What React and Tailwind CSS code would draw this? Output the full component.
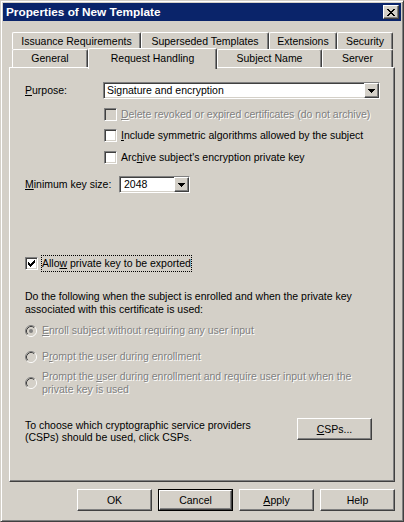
import React from "react";

const raised =
  "border border-t-white border-l-white border-r-[#404040] border-b-[#404040] shadow-[inset_-1px_-1px_0_#808080] bg-[#d4d0c8]";
const sunken =
  "border border-t-[#808080] border-l-[#808080] border-r-white border-b-white shadow-[inset_1px_1px_0_#404040,inset_-1px_-1px_0_#d4d0c8]";
const disabledText = "text-[#808080] [text-shadow:1px_1px_0_#ffffff]";

const U = ({ children }) => <span className="underline underline-offset-[1px]">{children}</span>;

const DropArrow = () => (
  <svg width="7" height="4" viewBox="0 0 7 4" shapeRendering="crispEdges">
    <path d="M0 0h7v1H0z M1 1h5v1H1z M2 2h3v1H2z M3 3h1v1H3z" fill="#000" />
  </svg>
);

const Combo = ({ value, className, textPad }) => (
  <div className={`flex h-[17px] bg-white ${sunken} ${className}`}>
    <div className={`flex-1 flex items-center leading-none ${textPad}`}>{value}</div>
    <div className={`w-[15px] h-full flex items-center justify-center ${raised}`}>
      <DropArrow />
    </div>
  </div>
);

const Check = ({ checked, disabled }) => (
  <div
    className={`w-[13px] h-[13px] shrink-0 flex items-center justify-center ${sunken} ${
      disabled ? "bg-[#d4d0c8]" : "bg-white"
    }`}
  >
    {checked && (
      <svg width="7" height="7" viewBox="0 0 7 7" shapeRendering="crispEdges">
        <path
          d="M6 0h1v1H6z M5 1h2v1H5z M0 2h1v1H0z M4 2h3v1H4z M0 3h2v1H0z M3 3h3v1H3z M0 4h5v1H0z M1 5h3v1H1z M2 6h1v1H2z"
          fill="#000"
        />
      </svg>
    )}
  </div>
);

const Radio = ({ checked }) => (
  <svg width="12" height="12" viewBox="0 0 12 12" className="shrink-0">
    <circle cx="6" cy="6" r="4.2" fill="#d4d0c8" />
    <path d="M2.11 9.89 A5.5 5.5 0 0 1 9.89 2.11" stroke="#808080" fill="none" />
    <path d="M9.89 2.11 A5.5 5.5 0 0 1 2.11 9.89" stroke="#ffffff" fill="none" />
    <path d="M2.82 9.18 A4.5 4.5 0 0 1 9.18 2.82" stroke="#404040" fill="none" />
    <path d="M9.18 2.82 A4.5 4.5 0 0 1 2.82 9.18" stroke="#d4d0c8" fill="none" />
    {checked && <circle cx="6" cy="6" r="2" fill="#808080" />}
  </svg>
);

const Tab = ({ label, w, selected }) => (
  <div
    className={`flex justify-center rounded-t-[2px] border-t border-l border-r border-t-white border-l-white border-r-[#404040] shadow-[inset_-1px_0_0_#808080] bg-[#d4d0c8] ${w} ${
      selected ? "relative z-10 h-[21px] -mt-[1px] pt-[3px]" : "h-full items-center"
    }`}
  >
    {label}
  </div>
);

const Button = ({ children, isDefault }) =>
  isDefault ? (
    <div className="w-[75px] h-[22px] border border-black">
      <div className={`w-full h-full flex items-center justify-center ${raised}`}>{children}</div>
    </div>
  ) : (
    <div className={`w-[75px] h-[22px] flex items-center justify-center ${raised}`}>{children}</div>
  );

const App = () => {
  return (
    <div className="w-[404px] h-[522px] bg-[#d4d0c8] border border-t-[#d4d0c8] border-l-[#d4d0c8] border-r-[#404040] border-b-[#404040] shadow-[inset_1px_1px_0_#ffffff,inset_-1px_-1px_0_#808080] p-[2px] font-['Liberation_Sans',Arial,sans-serif] text-[10.5px] text-black leading-[13px] overflow-hidden">
      {/* title bar */}
      <div className="h-[18px] bg-[#0a246a] flex items-center justify-between pl-[3px] pr-[2px]">
        <span className="text-white font-bold text-[11.8px]">Properties of New Template</span>
        <div className={`w-[16px] h-[14px] flex items-center justify-center ${raised}`}>
          <svg width="8" height="7" viewBox="0 0 8 7" shapeRendering="crispEdges">
            <path
              d="M0 0h2v1H0z M6 0h2v1H6z M1 1h2v1H1z M5 1h2v1H5z M2 2h4v1H2z M3 3h2v1H3z M2 4h4v1H2z M1 5h2v1H1z M5 5h2v1H5z M0 6h2v1H0z M6 6h2v1H6z"
              fill="#000"
            />
          </svg>
        </div>
      </div>

      {/* tabs */}
      <div className="mt-[11px] ml-[9px] h-[17px] flex">
        <Tab label="Issuance Requirements" w="w-[129px]" />
        <Tab label="Superseded Templates" w="w-[128px]" />
        <Tab label="Extensions" w="w-[68px]" />
        <Tab label="Security" w="w-[56px]" />
      </div>
      <div className="ml-[9px] h-[18px] flex items-start">
        <Tab label="General" w="w-[76px]" />
        <Tab label="Request Handling" w="w-[129px]" selected />
        <Tab label="Subject Name" w="w-[105px]" />
        <Tab label="Server" w="w-[71px]" />
      </div>

      {/* tab page */}
      <div className="ml-[6px] w-[386px] h-[415px] border border-t-white border-l-white border-r-[#404040] border-b-[#404040] shadow-[inset_-1px_-1px_0_#808080] pl-[15px] pt-[14px]">
        <div className="flex items-center h-[17px]">
          <div className="w-[78px]">
            <U>P</U>urpose:
          </div>
          <Combo value="Signature and encryption" className="w-[277px]" textPad="pl-[3px]" />
        </div>

        <div className="ml-[79px] mt-[9px] flex items-center gap-[4px] h-[13px]">
          <Check disabled />
          <span className={disabledText}>
            <U>D</U>elete revoked or expired certificates (do not archive)
          </span>
        </div>
        <div className="ml-[79px] mt-[8px] flex items-center gap-[4px] h-[13px]">
          <Check />
          <span>
            <U>I</U>nclude symmetric algorithms allowed by the subject
          </span>
        </div>
        <div className="ml-[79px] mt-[9px] flex items-center gap-[4px] h-[13px]">
          <Check />
          <span>
            Arc<U>h</U>ive subject's encryption private key
          </span>
        </div>

        <div className="mt-[12px] flex items-center h-[17px]">
          <div className="w-[94px]">
            <U>M</U>inimum key size:
          </div>
          <Combo value="2048" className="w-[71px]" textPad="pl-[4px]" />
        </div>

        <div className="mt-[64px] flex items-center gap-[3px] h-[13px]">
          <Check checked />
          <span className="border border-dotted border-black py-[1px] leading-[13px]">
            Allo<U>w</U> private key to be exported
          </span>
        </div>

        <div className="mt-[20px] leading-[13px]">
          Do the following when the subject is enrolled and when the private key
          <br />
          associated with this certificate is used:
        </div>

        <div className="mt-[8px] flex items-center gap-[5px] h-[13px]">
          <Radio checked />
          <span className={disabledText}>
            <U>E</U>nroll subject without requiring any user input
          </span>
        </div>
        <div className="mt-[13px] flex items-center gap-[5px] h-[13px]">
          <Radio />
          <span className={disabledText}>
            P<U>r</U>ompt the user during enrollment
          </span>
        </div>
        <div className="mt-[7px] flex items-center gap-[5px]">
          <Radio />
          <span className={`${disabledText} leading-[13px]`}>
            Prompt the <U>u</U>ser during enrollment and require user input when the
            <br />
            private key is used
          </span>
        </div>

        <div className="mt-[22px] flex items-start">
          <div className="w-[272px] leading-[12px] pt-[1px]">
            To choose which cryptographic service providers
            <br />
            (CSPs) should be used, click CSPs.
          </div>
          <Button>
            <span>
              <U>C</U>SPs...
            </span>
          </Button>
        </div>
      </div>

      {/* dialog buttons */}
      <div className="mt-[7px] ml-[74px] flex gap-[6px]">
        <Button>OK</Button>
        <Button isDefault>Cancel</Button>
        <Button>
          <span>
            <U>A</U>pply
          </span>
        </Button>
        <Button>Help</Button>
      </div>
    </div>
  );
};

export default App;
